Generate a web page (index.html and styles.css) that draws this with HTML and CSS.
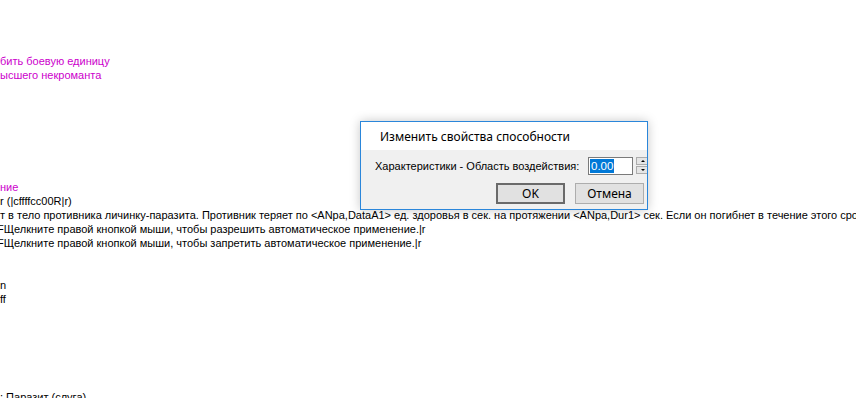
FILE: index.html
```html
<!DOCTYPE html>
<html>
<head>
<meta charset="utf-8">
<link rel="stylesheet" href="styles.css">
</head>
<body>
<div class="text">
  <div class="line magenta">бить боевую единицу</div>
  <div class="line magenta">ысшего некроманта</div>
  <div class="line"></div><div class="line"></div><div class="line"></div><div class="line"></div><div class="line"></div><div class="line"></div><div class="line"></div>
  <div class="line magenta">ние</div>
  <div class="line">r (|cffffcc00R|r)</div>
  <div class="line">т в тело противника личинку-паразита. Противник теряет по &lt;ANpa,DataA1&gt; ед. здоровья в сек. на протяжении &lt;ANpa,Dur1&gt; сек. Если он погибнет в течение этого срока</div>
  <div class="line cut">FЩелкните правой кнопкой мыши, чтобы разрешить автоматическое применение.|r</div>
  <div class="line cut">FЩелкните правой кнопкой мыши, чтобы запретить автоматическое применение.|r</div>
  <div class="line"></div><div class="line"></div>
  <div class="line">n</div>
  <div class="line">ff</div>
  <div class="line"></div><div class="line"></div><div class="line"></div><div class="line"></div><div class="line"></div><div class="line"></div>
  <div class="line">: Паразит (слуга)</div>
</div>

<div class="dialog">
  <div class="dialog-title">Изменить свойства способности</div>
  <div class="dialog-body">
    <div class="field-row">
      <span class="label">Характеристики - Область воздействия:</span>
      <span class="input"><span class="sel">0.00</span></span>
      <span class="spin">
        <span class="spin-btn"><span class="arrow up"></span></span>
        <span class="spin-btn"><span class="arrow down"></span></span>
      </span>
    </div>
    <div class="button-row">
      <span class="btn default">OK</span>
      <span class="btn">Отмена</span>
    </div>
  </div>
</div>
</body>
</html>
```

FILE: styles.css
```css
html, body {
  margin: 0;
  padding: 0;
  background: #ffffff;
  width: 856px;
  height: 398px;
  overflow: hidden;
}
body {
  position: relative;
  font-family: "Liberation Sans", Arial, sans-serif;
  font-size: 11px;
  color: #000;
}
.text {
  padding-top: 54px;
}
.line {
  height: 14px;
  line-height: 14px;
  white-space: nowrap;
}
.magenta {
  color: #cc00cc;
}
.cut {
  text-indent: -3px;
}
.dialog {
  position: absolute;
  left: 360px;
  top: 121px;
  width: 286px;
  height: 87px;
  border: 1px solid #2a86da;
  background: #f0f0f0;
  box-shadow: 0 0 10px rgba(0,0,0,0.22);
  overflow: hidden;
  display: flex;
  flex-direction: column;
}
.dialog-title {
  background: #ffffff;
  height: 28px;
  line-height: 30px;
  padding-left: 19px;
  font-family: "Noto Sans", "Open Sans", sans-serif;
  font-size: 12px;
  color: #000;
}
.dialog-body {
  flex: 1;
  padding: 6px 0 0 14px;
  display: flex;
  flex-direction: column;
}
.field-row {
  display: flex;
  align-items: center;
  height: 19px;
}
.label {
  width: 213px;
  flex-shrink: 0;
  white-space: nowrap;
  font-size: 11px;
}
.input {
  box-sizing: border-box;
  width: 45px;
  height: 18px;
  flex-shrink: 0;
  background: #fff;
  border: 1px solid #7a7a7a;
  padding: 1px 1px;
  display: flex;
  align-items: center;
}
.sel {
  background: #0078d7;
  color: #fff;
  font-size: 11.5px;
  line-height: 14px;
  padding: 0 1px 0 1px;
}
.spin {
  margin-left: 3px;
  width: 14px;
  height: 18px;
  display: flex;
  flex-direction: column;
  gap: 1px;
  flex-shrink: 0;
}
.spin-btn {
  box-sizing: border-box;
  height: 8px;
  border: 1px solid #acacac;
  background: #e5e5e5;
  display: flex;
  align-items: center;
  justify-content: center;
}
.arrow {
  width: 0;
  height: 0;
  border-left: 2px solid transparent;
  border-right: 2px solid transparent;
}
.arrow.up {
  border-bottom: 2px solid #000;
}
.arrow.down {
  border-top: 2px solid #000;
}
.button-row {
  display: flex;
  justify-content: flex-end;
  gap: 10px;
  margin-top: 8px;
  padding-right: 3px;
}
.btn {
  box-sizing: border-box;
  width: 69px;
  height: 21px;
  border: 1px solid #adadad;
  background: #e1e1e1;
  display: flex;
  align-items: center;
  justify-content: center;
  font-family: "Noto Sans", "Open Sans", sans-serif;
  font-size: 12px;
}
.btn.default {
  border: 2px solid #6a6a6a;
}
```
